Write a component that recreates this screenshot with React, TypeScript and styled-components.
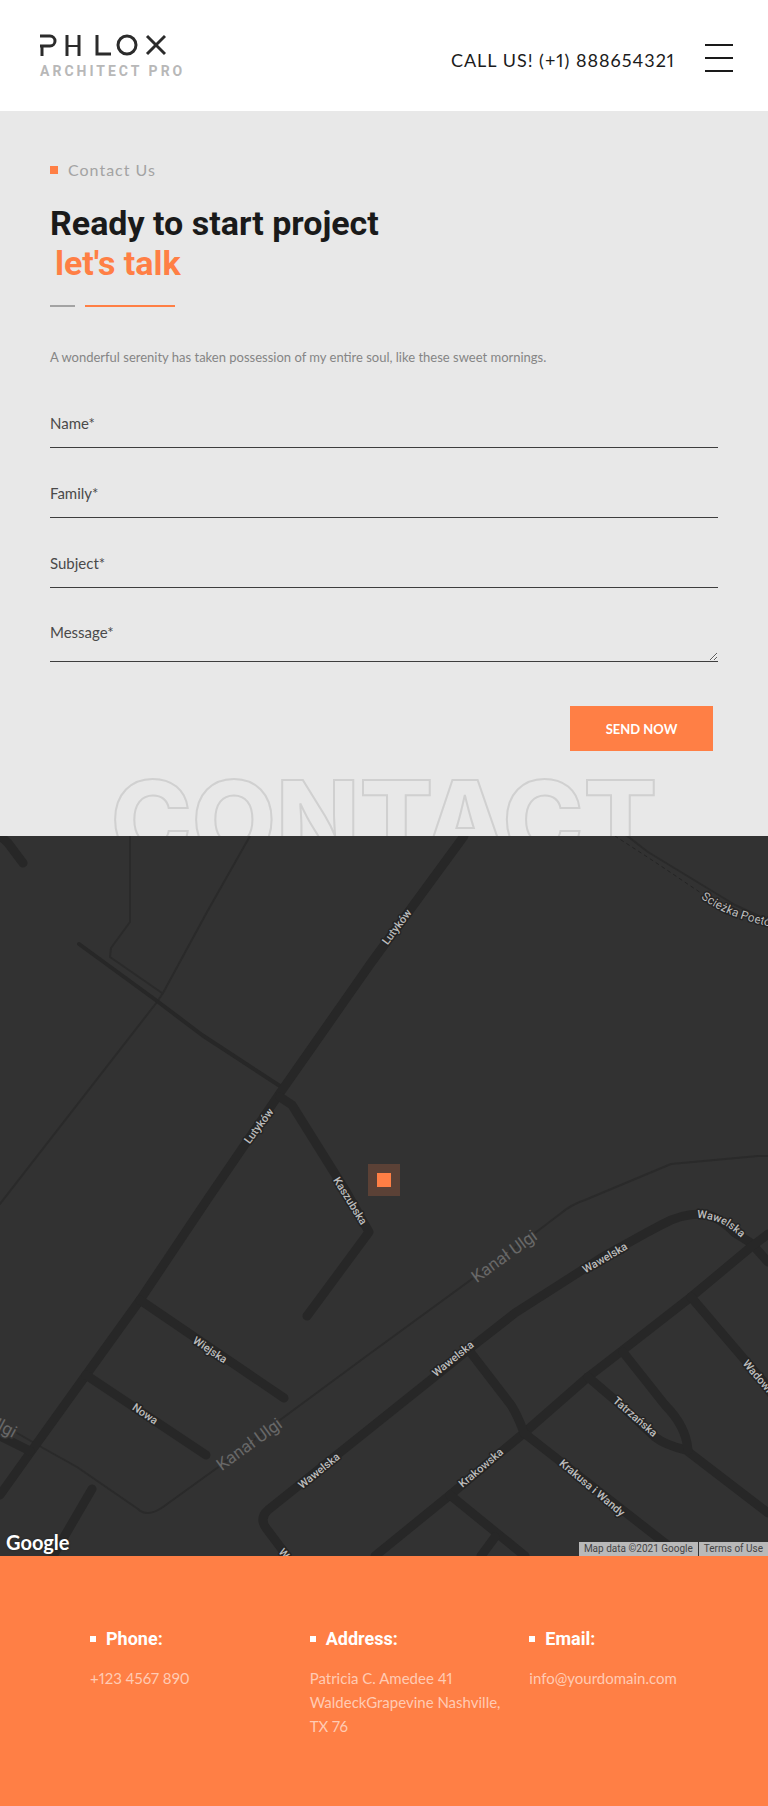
import React from "react";
import styled, { createGlobalStyle } from "styled-components";

const accent = "#ff7f45";
const bodyFont = `Lato, "Noto Sans", sans-serif`;
const headFont = `Roboto, "Noto Sans", sans-serif`;

const GlobalStyle = createGlobalStyle`
  *, *::before, *::after { box-sizing: border-box; }
  body { margin: 0; background: #fff; font-family: ${bodyFont}; font-variant-numeric: proportional-nums; }
`;

const Header = styled.header`
  display: flex;
  align-items: flex-start;
  justify-content: space-between;
  height: 111px;
  padding: 34px 35px 0 40px;
  background: #fff;
`;

const Brand = styled.a`
  display: flex;
  flex-direction: column;
  gap: 7px;
  text-decoration: none;
`;

const BrandMark = styled.svg`
  display: block;
  width: 126px;
  height: 22px;
  fill: none;
  stroke: #2b2b2b;
  stroke-width: 3;
`;

const BrandTag = styled.span`
  font: 700 14px/16px ${headFont};
  letter-spacing: 3px;
  color: #b8b8b8;
`;

const HeaderActions = styled.div`
  display: flex;
  align-items: flex-start;
  gap: 30px;
  padding-top: 10px;
`;

const CallLink = styled.a`
  padding-top: 2px;
  font-size: 18px;
  line-height: 28px;
  letter-spacing: 1px;
  color: #1b1b1b;
  text-decoration: none;
`;

const MenuButton = styled.button`
  display: flex;
  flex-direction: column;
  gap: 11px;
  width: 28px;
  padding: 0;
  border: 0;
  background: none;
  cursor: pointer;
`;

const MenuBar = styled.span`
  height: 2px;
  background: #1a1a1a;
`;

const ContactSection = styled.section`
  position: relative;
  overflow: hidden;
  padding: 47px 50px 85px;
  background: #e8e8e8;
`;

const Eyebrow = styled.p`
  display: flex;
  align-items: center;
  gap: 10px;
  margin: 0;
  font-size: 16px;
  line-height: 24px;
  letter-spacing: 1px;
  color: #a3a3a3;
`;

const Square = styled.span<{ $size: number; $color: string }>`
  flex: none;
  width: ${(p) => p.$size}px;
  height: ${(p) => p.$size}px;
  background: ${(p) => p.$color};
`;

const Title = styled.h1`
  margin: 21px 0 0;
  font: 700 34px/40px ${headFont};
  color: #1a1a1a;
`;

const TitleAccent = styled.span`
  display: block;
  padding-left: 5px;
  color: ${accent};
`;

const Divider = styled.div`
  display: flex;
  gap: 10px;
  margin-top: 22px;
`;

const DividerBar = styled.span<{ $width: number; $color: string }>`
  width: ${(p) => p.$width}px;
  height: 2px;
  background: ${(p) => p.$color};
`;

const Intro = styled.p`
  margin: 38px 0 0;
  font-size: 13px;
  line-height: 24px;
  color: #858585;
`;

const Form = styled.form`
  display: flex;
  flex-direction: column;
  margin-top: 33px;
`;

const Field = styled.input`
  display: block;
  width: 100%;
  height: 46px;
  margin-bottom: 24px;
  padding: 0 0 3px;
  border: 0;
  border-bottom: 1px solid #3d3d3d;
  border-radius: 0;
  outline: 0;
  background: none;
  font: 400 15px/24px ${bodyFont};
  color: #4a4a4a;
  &::placeholder { color: #4a4a4a; opacity: 1; }
`;

const MessageField = styled(Field)`
  height: 50px;
  padding-top: 8px;
`;

const SendButton = styled.button`
  align-self: flex-end;
  width: 143px;
  height: 45px;
  margin: 20px 5px 0 0;
  padding: 0;
  border: 0;
  background: ${accent};
  font: 700 13px/20px ${bodyFont};
  color: #fff;
  cursor: pointer;
`;

const GhostWord = styled.span`
  position: absolute;
  left: 0;
  right: 0;
  bottom: -50px;
  font: 800 109px/134px Inter, sans-serif;
  text-align: center;
  color: transparent;
  -webkit-text-stroke: 2px #d0d0d0;
  pointer-events: none;
`;

const MapArea = styled.section`
  position: relative;
  overflow: hidden;
  background: #323232;
`;

const MapCanvas = styled.svg`
  display: block;
  width: 100%;
  height: 720px;
  fill: none;
  stroke-linecap: round;
  stroke-linejoin: round;
`;

const MapLabel = styled.text<{ $kind?: "street" | "water" | "path" }>`
  font-family: ${headFont};
  font-size: ${(p) => (p.$kind === "water" ? 17 : p.$kind === "path" ? 12 : 11)}px;
  font-weight: ${(p) => (p.$kind === "water" || p.$kind === "path" ? 400 : 500)};
  fill: ${(p) => (p.$kind === "water" ? "#686868" : "#bdbdbd")};
  stroke: ${(p) => (p.$kind === "water" ? "#323232" : "#242424")};
  stroke-width: 3px;
  paint-order: stroke;
`;

const GoogleLogo = styled.a`
  position: absolute;
  left: 6px;
  bottom: 2px;
  font: 700 20px/24px Lato, sans-serif;
  color: #fff;
  text-decoration: none;
  text-shadow: 0 0 2px #222;
`;

const Attribution = styled.div`
  position: absolute;
  right: 0;
  bottom: 0;
  display: flex;
  gap: 1px;
`;

const Credit = styled.span`
  padding: 0 5px;
  background: #b9b9b9;
  font: 400 10px/14px ${headFont};
  color: #444;
  white-space: nowrap;
  a { color: inherit; text-decoration: none; }
`;

const Footer = styled.footer`
  display: grid;
  grid-template-columns: repeat(3, 1fr);
  min-height: 250px;
  padding: 70px 19px 40px 90px;
  background: ${accent};
`;

const FooterTitle = styled.h2`
  display: flex;
  align-items: center;
  gap: 10px;
  margin: 0;
  font: 700 18px/26px ${headFont};
  color: #fff;
`;

const FooterText = styled.p`
  margin: 14px 0 0;
  padding-right: 16px;
  font-size: 15px;
  line-height: 24px;
  color: #ffcbb4;
  a { color: inherit; text-decoration: none; }
`;

const paths = [
  "M130 0V86L111 112L110 121L162 157",
  "M250 0L207 76L163 157L157 166L0 368",
  "M626 -1L648 16L735 69L768 84",
  "M768 320L758 320L671 328L585 364Q572 368 560 378L535 397L368 519L280 584L217 632L163 671Q147 682 138 673L77 631L43 612L17 597",
];

const roads = [
  "M464 0L371 127L343 167L280 257L207 364L140 464L86 539L30 617L0 659",
  "M280 261L292 269L347 357L369 396L307 480",
  "M140 464L284 562",
  "M86 539L206 619",
  "M0 600L30 615",
  "M92 653L53 720",
  "M-3 -3L8 7L23 27",
  "M768 426L751 407L735 397Q716 378 701 378Q680 378 661 389L646 397L601 422L515 477L478 506L368 594L268 674Q259 682 266 692L287 720",
  "M768 398L751 411L691 461L623 514L588 541L524 597L450 659L375 720",
  "M471 517L511 569Q518 580 524 597L661 704L682 720",
  "M691 461L768 551",
  "M588 541L615 564L655 601Q665 609 686 614L768 677",
  "M623 516L665 569Q686 590 688 614",
  "M450 659L525 720",
  "M495 701L481 720",
];

type Place = { name: string; x: number; y: number; turn: number; kind?: "water" };

const places: Place[] = [
  { name: "Lutyków", x: 397, y: 91, turn: -53 },
  { name: "Lutyków", x: 259, y: 290, turn: -53 },
  { name: "Kaszubska", x: 350, y: 365, turn: 58 },
  { name: "Wiejska", x: 210, y: 514, turn: 34 },
  { name: "Nowa", x: 145, y: 578, turn: 34 },
  { name: "Wawelska", x: 319, y: 635, turn: -39 },
  { name: "Wawelska", x: 453, y: 523, turn: -39 },
  { name: "Wawelska", x: 605, y: 422, turn: -30 },
  { name: "Krakowska", x: 481, y: 632, turn: -40 },
  { name: "Tatrzańska", x: 635, y: 581, turn: 41 },
  { name: "Krakusa i Wandy", x: 592, y: 652, turn: 40 },
  { name: "Wadowicka", x: 763, y: 547, turn: 50 },
  { name: "Wrocławska", x: 300, y: 737, turn: 50 },
  { name: "Kanał Ulgi", x: 504, y: 420, turn: -36, kind: "water" },
  { name: "Kanał Ulgi", x: 249, y: 608, turn: -36, kind: "water" },
  { name: "Kanał Ulgi", x: -18, y: 579, turn: 28, kind: "water" },
];

const fields = ["Name*", "Family*", "Subject*"];

function CityMap() {
  return (
    <MapCanvas viewBox="0 0 768 720" preserveAspectRatio="xMidYMid slice" role="img" aria-label="Map">
      <defs>
        <path id="bend" d="M697 382Q722 382 742 403" />
        <path id="trail" d="M701 62Q726 82 777 92" />
      </defs>
      <g stroke="#2a2a2a" strokeWidth="2">
        {paths.map((d) => <path key={d} d={d} />)}
        <path d="M615 0L655 26L701 57" strokeDasharray="3 4" strokeWidth="1" stroke="#242424" />
      </g>
      <path d="M79 108L157 165L202 199L283 252" stroke="#272727" strokeWidth="4" />
      <g stroke="#272727" strokeWidth="9">
        {roads.map((d) => <path key={d} d={d} />)}
      </g>
      {places.map((p) => (
        <MapLabel
          key={`${p.name}-${p.x}`}
          $kind={p.kind}
          textAnchor="middle"
          dominantBaseline="central"
          transform={`translate(${p.x} ${p.y}) rotate(${p.turn})`}
        >
          {p.name}
        </MapLabel>
      ))}
      <MapLabel><textPath href="#bend">Wawelska</textPath></MapLabel>
      <MapLabel $kind="path"><textPath href="#trail">Scieżka Poetów</textPath></MapLabel>
      <rect x="368" y="328" width="32" height="32" fill={accent} fillOpacity="0.2" />
      <rect x="377" y="337" width="14" height="14" fill={accent} />
    </MapCanvas>
  );
}

export default function App() {
  return (
    <>
      <GlobalStyle />
      <Header>
        <Brand href="#" aria-label="Phlox Architect Pro">
          <BrandMark viewBox="0 0 126 22" aria-hidden="true">
            <rect x="-12" y="2" width="27" height="10" rx="5" />
            <line x1="2" y1="11" x2="2" y2="22" />
            <line x1="27" y1="1" x2="27" y2="22" />
            <line x1="39" y1="1" x2="39" y2="22" />
            <line x1="27" y1="12" x2="39" y2="12" strokeWidth="2" />
            <polyline points="57,1 57,20 71,20" />
            <circle cx="87" cy="11" r="9" />
            <line x1="107" y1="2" x2="125" y2="20" />
            <line x1="125" y1="2" x2="107" y2="20" />
          </BrandMark>
          <BrandTag>ARCHITECT PRO</BrandTag>
        </Brand>
        <HeaderActions>
          <CallLink href="tel:+1888654321">CALL US! (+1) 888654321</CallLink>
          <MenuButton type="button" aria-label="Open menu">
            <MenuBar /><MenuBar /><MenuBar />
          </MenuButton>
        </HeaderActions>
      </Header>
      <main>
        <ContactSection>
          <Eyebrow><Square $size={8} $color={accent} />Contact Us</Eyebrow>
          <Title>Ready to start project<TitleAccent>let's talk</TitleAccent></Title>
          <Divider>
            <DividerBar $width={25} $color="#a3a3a3" />
            <DividerBar $width={90} $color={accent} />
          </Divider>
          <Intro>A wonderful serenity has taken possession of my entire soul, like these sweet mornings.</Intro>
          <Form>
            {fields.map((name) => (
              <Field key={name} type="text" placeholder={name} aria-label={name} />
            ))}
            <MessageField as="textarea" placeholder="Message*" aria-label="Message*" />
            <SendButton type="submit">SEND NOW</SendButton>
          </Form>
          <GhostWord aria-hidden="true">CONTACT</GhostWord>
        </ContactSection>
        <MapArea>
          <CityMap />
          <GoogleLogo href="#">Google</GoogleLogo>
          <Attribution>
            <Credit>Map data ©2021 Google</Credit>
            <Credit><a href="#">Terms of Use</a></Credit>
          </Attribution>
        </MapArea>
      </main>
      <Footer>
        <div>
          <FooterTitle><Square $size={6} $color="#fff" />Phone:</FooterTitle>
          <FooterText>+123 4567 890</FooterText>
        </div>
        <div>
          <FooterTitle><Square $size={6} $color="#fff" />Address:</FooterTitle>
          <FooterText>Patricia C. Amedee 41 WaldeckGrapevine Nashville, TX 76</FooterText>
        </div>
        <div>
          <FooterTitle><Square $size={6} $color="#fff" />Email:</FooterTitle>
          <FooterText><a href="mailto:info@yourdomain.com">info@yourdomain.com</a></FooterText>
        </div>
      </Footer>
    </>
  );
}
